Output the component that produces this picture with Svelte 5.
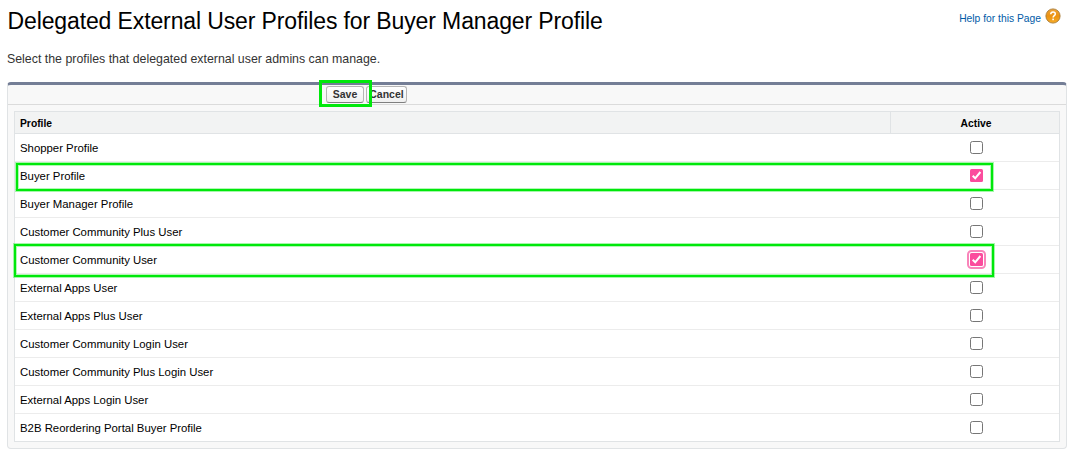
<script>
  let rows = $state([
    { name: 'Shopper Profile', active: false },
    { name: 'Buyer Profile', active: true, mark: 'first' },
    { name: 'Buyer Manager Profile', active: false },
    { name: 'Customer Community Plus User', active: false },
    { name: 'Customer Community User', active: true, focused: true, mark: 'second' },
    { name: 'External Apps User', active: false },
    { name: 'External Apps Plus User', active: false },
    { name: 'Customer Community Login User', active: false },
    { name: 'Customer Community Plus Login User', active: false },
    { name: 'External Apps Login User', active: false },
    { name: 'B2B Reordering Portal Buyer Profile', active: false }
  ]);
</script>

<main>
  <header>
    <h1>Delegated External User Profiles for Buyer Manager Profile</h1>
    <a class="help" href="#help">
      <span>Help for this Page</span>
      <svg width="16" height="16" viewBox="0 0 16 16" aria-hidden="true">
        <defs>
          <linearGradient id="orb" x1="0" y1="0" x2="0" y2="1">
            <stop offset="0" stop-color="#eda53c" />
            <stop offset="0.5" stop-color="#ec9312" />
            <stop offset="1" stop-color="#f6ac26" />
          </linearGradient>
        </defs>
        <circle cx="8" cy="8" r="7.1" fill="url(#orb)" stroke="#a87a35" stroke-width="0.9" />
        <path d="M5.7 6.3C5.8 4.7 6.8 4 8 4c1.4 0 2.3.8 2.3 2 0 1.6-2.2 1.7-2.2 3.4" fill="none" stroke="#fff" stroke-width="1.5" />
        <rect x="7.3" y="10.6" width="1.6" height="1.6" fill="#fff" />
      </svg>
    </a>
  </header>
  <p>Select the profiles that delegated external user admins can manage.</p>

  <section class="panel">
    <div class="bar">
      <span class="save"><button>Save</button></span>
      <button class="cancel">Cancel</button>
    </div>
    <div class="table">
      <div class="row head"><span class="name">Profile</span><span class="cell">Active</span></div>
      {#each rows as row}
        <div class="row">
          <span class="name">{row.name}</span>
          <label class="cell">
            <input type="checkbox" aria-label={row.name} bind:checked={row.active} />
            <span class="box" class:on={row.active} class:focused={row.focused}>
              {#if row.active}
                <svg width="13" height="13" viewBox="0 0 13 13" aria-hidden="true">
                  <path d="M2.7 6.8 5.2 9.3 10.4 3" fill="none" stroke="#fff" stroke-width="2" />
                </svg>
              {/if}
            </span>
          </label>
          {#if row.mark}<i class="mark {row.mark}"></i>{/if}
        </div>
      {/each}
    </div>
  </section>
</main>

<style>
  :global(body) { margin: 0; background: #fff; }
  main {
    box-sizing: border-box;
    height: 457px;
    padding: 0 9px 0 7px;
    overflow: hidden;
    font-family: "Liberation Sans", Arial, sans-serif;
    color: #000;
  }
  header { display: flex; justify-content: space-between; height: 48px; }
  h1 {
    margin: 8px 0 0 0.5px;
    font-size: 23px;
    letter-spacing: -0.12px;
    line-height: 26px;
    font-weight: 400;
    white-space: nowrap;
  }
  .help {
    display: flex;
    gap: 4px;
    padding: 8px 6px 0 0;
    height: 20px;
    color: #015ba7;
    font-size: 10.3px;
    line-height: 21px;
    text-decoration: none;
    white-space: nowrap;
  }
  p { margin: 3px 0 0; height: 31px; font-size: 12.37px; line-height: 16px; color: #333; }
  .panel {
    box-sizing: border-box;
    height: 367px;
    padding: 0 6px;
    border: 1px solid #e0e3e5;
    border-top: 3px solid #747e96;
    border-radius: 4px;
    background: #f8f8f8;
  }
  .bar {
    display: flex;
    gap: 2px;
    box-sizing: border-box;
    height: 20px;
    margin: 0 -6px 6px;
    padding: 1px 0 0 318px;
    border-bottom: 1px solid #dbdbdb;
  }
  .save { position: relative; height: 17px; }
  .save::after {
    content: "";
    position: absolute;
    left: -7px;
    top: -6px;
    width: 47px;
    height: 21px;
    border: 3px solid #00e80b;
    pointer-events: none;
  }
  button {
    display: block;
    box-sizing: border-box;
    width: 38px;
    height: 17px;
    padding: 0;
    border: 1px solid #b5b5b5;
    border-bottom-color: #7f7f7f;
    border-radius: 3px;
    background: linear-gradient(#fff, #f0f0f0);
    color: #333;
    font: bold 10.5px/15px "Liberation Sans", Arial, sans-serif;
    white-space: nowrap;
  }
  .cancel { width: 41px; }
  .table {
    border: 1px solid #e0e3e5;
    background: #fff;
  }
  .row {
    position: relative;
    display: grid;
    grid-template-columns: 875px 1fr;
    grid-template-rows: 100%;
    box-sizing: border-box;
    height: 28px;
    border-bottom: 1px solid #ececec;
    font-size: 11.37px;
    line-height: 28px;
  }
  .row:last-child { height: 27px; border-bottom: 0; }
  .head {
    height: 22px;
    border-color: #e0e3e5;
    background: #f2f3f3;
    font-size: 10.3px;
    line-height: 23px;
    font-weight: 700;
  }
  .name { padding-left: 5px; white-space: nowrap; }
  .cell { display: flex; justify-content: center; }
  .head .cell { border-left: 1px solid #e0e3e5; padding-left: 2px; }
  input { position: absolute; opacity: 0; width: 13px; height: 13px; margin: 7px 0 0; }
  .box {
    box-sizing: border-box;
    width: 13px;
    height: 13px;
    margin: 7px 0 0 3px;
    border: 1px solid #767676;
    border-radius: 2.5px;
    background: #fff;
  }
  .box svg { display: block; }
  .on { border: 0; border-radius: 1.5px; background: #fb4c9d; }
  .focused { outline: 2px solid #f984ba; outline-offset: 1px; }
  .mark {
    position: absolute;
    z-index: 1;
    box-sizing: border-box;
    border: 2px solid #00e80b;
    box-shadow: 0 0 0 1px rgba(0, 232, 11, 0.35), inset 0 0 0 1px rgba(0, 232, 11, 0.3);
    pointer-events: none;
  }
  .first { left: 1px; top: 1px; width: 977px; height: 28px; }
  .second { left: -1px; top: -2px; width: 980px; height: 33px; }
</style>
